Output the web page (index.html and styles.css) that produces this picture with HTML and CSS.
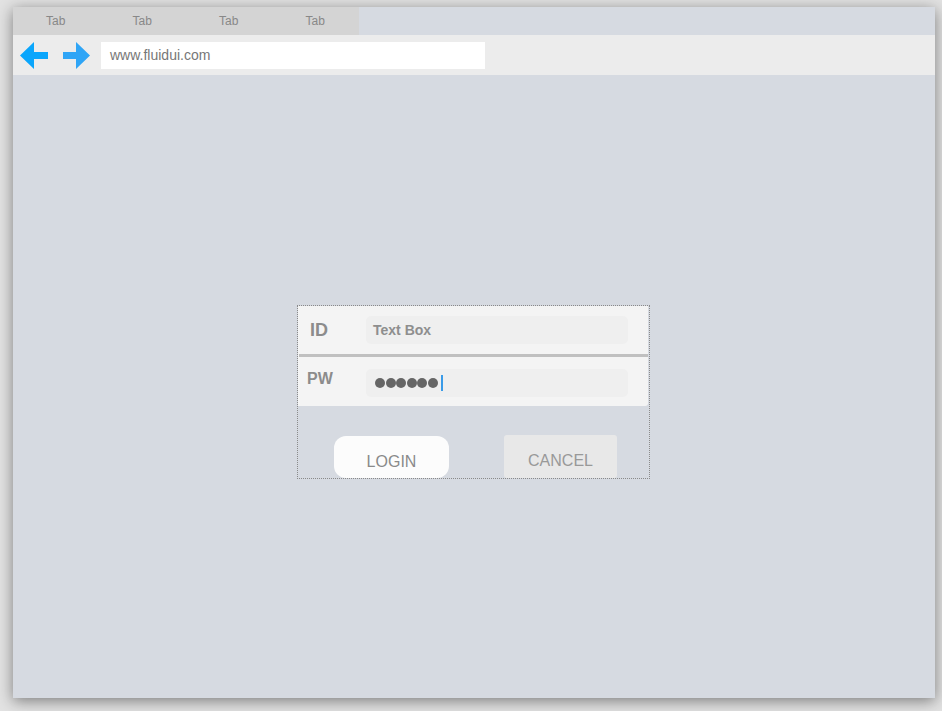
FILE: index.html
```html
<!DOCTYPE html>
<html>
<head>
<meta charset="utf-8">
<link rel="stylesheet" href="styles.css">
</head>
<body>
<div class="window">
  <div class="tabbar">
    <div class="tabs">
      <div class="tab">Tab</div>
      <div class="tab">Tab</div>
      <div class="tab">Tab</div>
      <div class="tab">Tab</div>
    </div>
  </div>
  <div class="addressbar">
    <svg class="arrow-left" width="28" height="27" viewBox="0 0 28 27"><path d="M0 13.5 L14 0 L14 10 L28 10 L28 17 L14 17 L14 27 Z" fill="#0aa6fc"/></svg>
    <svg class="arrow-right" width="27" height="27" viewBox="0 0 27 27"><path d="M27 13.5 L13 0 L13 10 L0 10 L0 17 L13 17 L13 27 Z" fill="#2fa5f6"/></svg>
    <div class="url">www.fluidui.com</div>
  </div>
  <div class="content">
    <div class="panel">
      <div class="form">
        <div class="row row-id">
          <div class="label label-id">ID</div>
          <div class="textbox"><span class="placeholder">Text Box</span></div>
        </div>
        <div class="separator"></div>
        <div class="row row-pw">
          <div class="label label-pw">PW</div>
          <div class="textbox pwbox">
            <span class="dot"></span><span class="dot"></span><span class="dot"></span><span class="dot"></span><span class="dot"></span><span class="dot"></span><span class="caret"></span>
          </div>
        </div>
      </div>
      <div class="buttons">
        <div class="btn btn-login">LOGIN</div>
        <div class="btn btn-cancel">CANCEL</div>
      </div>
    </div>
  </div>
</div>
</body>
</html>
```
FILE: styles.css
```css
html, body {
  margin: 0;
  padding: 0;
}
body {
  background: #e2e2e2;
  width: 942px;
  height: 711px;
  overflow: hidden;
  font-family: "Liberation Sans", Arial, sans-serif;
}
.window {
  width: 922px;
  height: 691px;
  margin: 7px 0 0 13px;
  background: #d6dae1;
  display: flex;
  flex-direction: column;
  box-shadow: 0 3px 14px rgba(0, 0, 0, 0.45);
}
.tabbar {
  height: 28px;
  display: flex;
  background: #d6dae1;
}
.tabs {
  width: 346px;
  background: #d4d4d4;
  display: grid;
  grid-template-columns: repeat(4, 1fr);
}
.tab {
  font-size: 12px;
  color: #888;
  line-height: 28px;
  text-align: center;
  padding-right: 1px;
}
.addressbar {
  height: 40px;
  background: #ececec;
  display: flex;
  align-items: center;
  padding-left: 7px;
}
.arrow-left {
  display: block;
}
.arrow-right {
  display: block;
  margin-left: 15px;
}
.url {
  margin-left: 11px;
  width: 375px;
  height: 27px;
  background: #fff;
  padding-left: 9px;
  font-size: 14px;
  line-height: 27px;
  color: #777;
}
.content {
  flex: 1;
  display: flex;
  justify-content: center;
  align-items: flex-start;
  padding-top: 230px;
}
.panel {
  width: 351px;
  height: 172px;
  margin-right: 1px;
  border: 1px dotted #8a8a8a;
  display: flex;
  flex-direction: column;
}
.form {
  width: 350px;
  background: #f4f4f4;
  border-bottom-right-radius: 3px;
}
.row {
  display: flex;
  align-items: center;
}
.row-id {
  height: 48px;
  padding-left: 12px;
}
.row-pw {
  height: 49px;
  padding-left: 9px;
}
.label {
  font-weight: bold;
  color: #8c8c8c;
}
.label-id {
  width: 56px;
  font-size: 18px;
}
.label-pw {
  width: 59px;
  font-size: 16px;
  margin-bottom: 5px;
}
.separator {
  height: 3px;
  margin-left: 1px;
  background: #c0c0c0;
}
.textbox {
  width: 262px;
  height: 28px;
  background: #efefef;
  border-radius: 5px;
  display: flex;
  align-items: center;
}
.row-pw .textbox {
  margin-top: 3px;
}
.placeholder {
  padding-left: 7px;
  font-size: 14px;
  font-weight: bold;
  color: #8e8e8e;
}
.pwbox {
  padding-left: 9px;
  width: 253px;
}
.dot {
  width: 10px;
  height: 10px;
  border-radius: 50%;
  background: #666;
  margin-right: 0.6px;
}
.caret {
  width: 2px;
  height: 16px;
  background: #3a9be8;
  margin-left: 2px;
}
.buttons {
  flex: 1;
  display: flex;
  align-items: flex-end;
  padding-left: 36px;
  gap: 55px;
}
.btn {
  font-size: 16px;
  line-height: 18px;
  text-align: center;
  box-sizing: border-box;
  padding-top: 17px;
}
.btn-login {
  width: 115px;
  height: 42px;
  background: #fcfcfc;
  border-radius: 12px;
  color: #8a8a8a;
}
.btn-cancel {
  width: 113px;
  height: 43px;
  background: #e8e8e8;
  border-radius: 3px;
  color: #999;
}
```
